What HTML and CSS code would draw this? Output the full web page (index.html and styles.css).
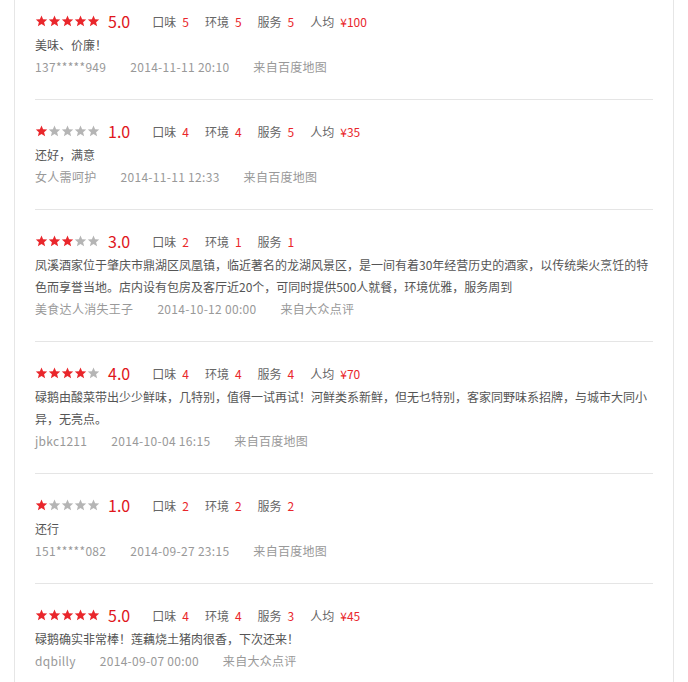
FILE: index.html
```html
<!DOCTYPE html>
<html lang="zh-CN">
  <head>
    <meta charset="UTF-8" />
    <meta name="viewport" content="width=device-width, initial-scale=1.0" />
    <title>用户评论</title>
    <link rel="stylesheet" href="styles.css">
  </head>
  <body>
    <svg class="defs" width="0" height="0">
      <symbol id="star" viewBox="0 0 12 12">
        <polygon points="6,0.4 7.6,4.2 11.7,4.5 8.6,7.2 9.6,11.3 6,9.1 2.4,11.3 3.4,7.2 0.3,4.5 4.4,4.2" />
      </symbol>
    </svg>

    <!-- Comment list -->
    <div class="comment-box">
      <div class="review">
        <div class="score-row">
          <span class="stars">
            <svg class="star on"><use href="#star" /></svg><svg class="star on"><use href="#star" /></svg><svg class="star on"><use href="#star" /></svg><svg class="star on"><use href="#star" /></svg><svg class="star on"><use href="#star" /></svg>
          </span>
          <span class="rating">5.0</span>
          <span class="sub">口味<em>5</em></span>
          <span class="sub">环境<em>5</em></span>
          <span class="sub">服务<em>5</em></span>
          <span class="sub">人均<em>¥100</em></span>
        </div>
        <p class="content">美味、价廉！</p>
        <div class="meta"><span>137*****949</span><span>2014-11-11 20:10</span><span>来自百度地图</span></div>
      </div>

      <div class="review">
        <div class="score-row">
          <span class="stars">
            <svg class="star on"><use href="#star" /></svg><svg class="star"><use href="#star" /></svg><svg class="star"><use href="#star" /></svg><svg class="star"><use href="#star" /></svg><svg class="star"><use href="#star" /></svg>
          </span>
          <span class="rating">1.0</span>
          <span class="sub">口味<em>4</em></span>
          <span class="sub">环境<em>4</em></span>
          <span class="sub">服务<em>5</em></span>
          <span class="sub">人均<em>¥35</em></span>
        </div>
        <p class="content">还好，满意</p>
        <div class="meta"><span>女人需呵护</span><span>2014-11-11 12:33</span><span>来自百度地图</span></div>
      </div>

      <div class="review">
        <div class="score-row">
          <span class="stars">
            <svg class="star on"><use href="#star" /></svg><svg class="star on"><use href="#star" /></svg><svg class="star on"><use href="#star" /></svg><svg class="star"><use href="#star" /></svg><svg class="star"><use href="#star" /></svg>
          </span>
          <span class="rating">3.0</span>
          <span class="sub">口味<em>2</em></span>
          <span class="sub">环境<em>1</em></span>
          <span class="sub">服务<em>1</em></span>
        </div>
        <p class="content">凤溪酒家位于肇庆市鼎湖区凤凰镇，临近著名的龙湖风景区，是一间有着30年经营历史的酒家，以传统柴火烹饪的特色而享誉当地。店内设有包房及客厅近20个，可同时提供500人就餐，环境优雅，服务周到</p>
        <div class="meta"><span>美食达人消失王子</span><span>2014-10-12 00:00</span><span>来自大众点评</span></div>
      </div>

      <div class="review">
        <div class="score-row">
          <span class="stars">
            <svg class="star on"><use href="#star" /></svg><svg class="star on"><use href="#star" /></svg><svg class="star on"><use href="#star" /></svg><svg class="star on"><use href="#star" /></svg><svg class="star"><use href="#star" /></svg>
          </span>
          <span class="rating">4.0</span>
          <span class="sub">口味<em>4</em></span>
          <span class="sub">环境<em>4</em></span>
          <span class="sub">服务<em>4</em></span>
          <span class="sub">人均<em>¥70</em></span>
        </div>
        <p class="content">碌鹅由酸菜带出少少鲜味，几特别，值得一试再试！河鲜类系新鲜，但无乜特别，客家同野味系招牌，与城市大同小异，无亮点。</p>
        <div class="meta"><span>jbkc1211</span><span>2014-10-04 16:15</span><span>来自百度地图</span></div>
      </div>

      <div class="review">
        <div class="score-row">
          <span class="stars">
            <svg class="star on"><use href="#star" /></svg><svg class="star"><use href="#star" /></svg><svg class="star"><use href="#star" /></svg><svg class="star"><use href="#star" /></svg><svg class="star"><use href="#star" /></svg>
          </span>
          <span class="rating">1.0</span>
          <span class="sub">口味<em>2</em></span>
          <span class="sub">环境<em>2</em></span>
          <span class="sub">服务<em>2</em></span>
        </div>
        <p class="content">还行</p>
        <div class="meta"><span>151*****082</span><span>2014-09-27 23:15</span><span>来自百度地图</span></div>
      </div>

      <div class="review">
        <div class="score-row">
          <span class="stars">
            <svg class="star on"><use href="#star" /></svg><svg class="star on"><use href="#star" /></svg><svg class="star on"><use href="#star" /></svg><svg class="star on"><use href="#star" /></svg><svg class="star on"><use href="#star" /></svg>
          </span>
          <span class="rating">5.0</span>
          <span class="sub">口味<em>4</em></span>
          <span class="sub">环境<em>4</em></span>
          <span class="sub">服务<em>3</em></span>
          <span class="sub">人均<em>¥45</em></span>
        </div>
        <p class="content">碌鹅确实非常棒！莲藕烧土猪肉很香，下次还来！</p>
        <div class="meta"><span>dqbilly</span><span>2014-09-07 00:00</span><span>来自大众点评</span></div>
      </div>
    </div>
  </body>
</html>
```

FILE: styles.css
```css
body {
  margin: 0;
  background: #fff;
  font-family: "Microsoft YaHei", "Noto Sans CJK SC", sans-serif;
  font-size: 12px;
  color: #666;
}
.defs {
  position: absolute;
  width: 0;
  height: 0;
}
.comment-box {
  width: 660px;
  margin-left: 14px;
  padding: 0 20px;
  box-sizing: border-box;
  border-left: 1px solid #e6e6e6;
  border-right: 1px solid #e6e6e6;
  min-height: 682px;
}
.review {
  padding: 18px 0 21px;
  border-bottom: 1px solid #e5e5e5;
}
.review:first-child {
  padding-top: 8px;
}
.score-row {
  display: flex;
  align-items: center;
  height: 26px;
}
.stars {
  display: flex;
  width: 65px;
}
.star {
  width: 13px;
  height: 12px;
  fill: #b5b5b5;
}
.star.on {
  fill: #e9262b;
}
.rating {
  margin: 0 22px 0 8px;
  font-size: 16px;
  color: #e0161c;
  line-height: 1;
}
.sub {
  margin-right: 16px;
  color: #666;
}
.sub em {
  font-style: normal;
  color: #e9262b;
  margin-left: 6px;
}
.content {
  margin: 0;
  line-height: 22px;
  color: #555;
}
.meta {
  display: flex;
  gap: 24px;
  line-height: 22px;
  color: #999;
  letter-spacing: 0.3px;
}
```
